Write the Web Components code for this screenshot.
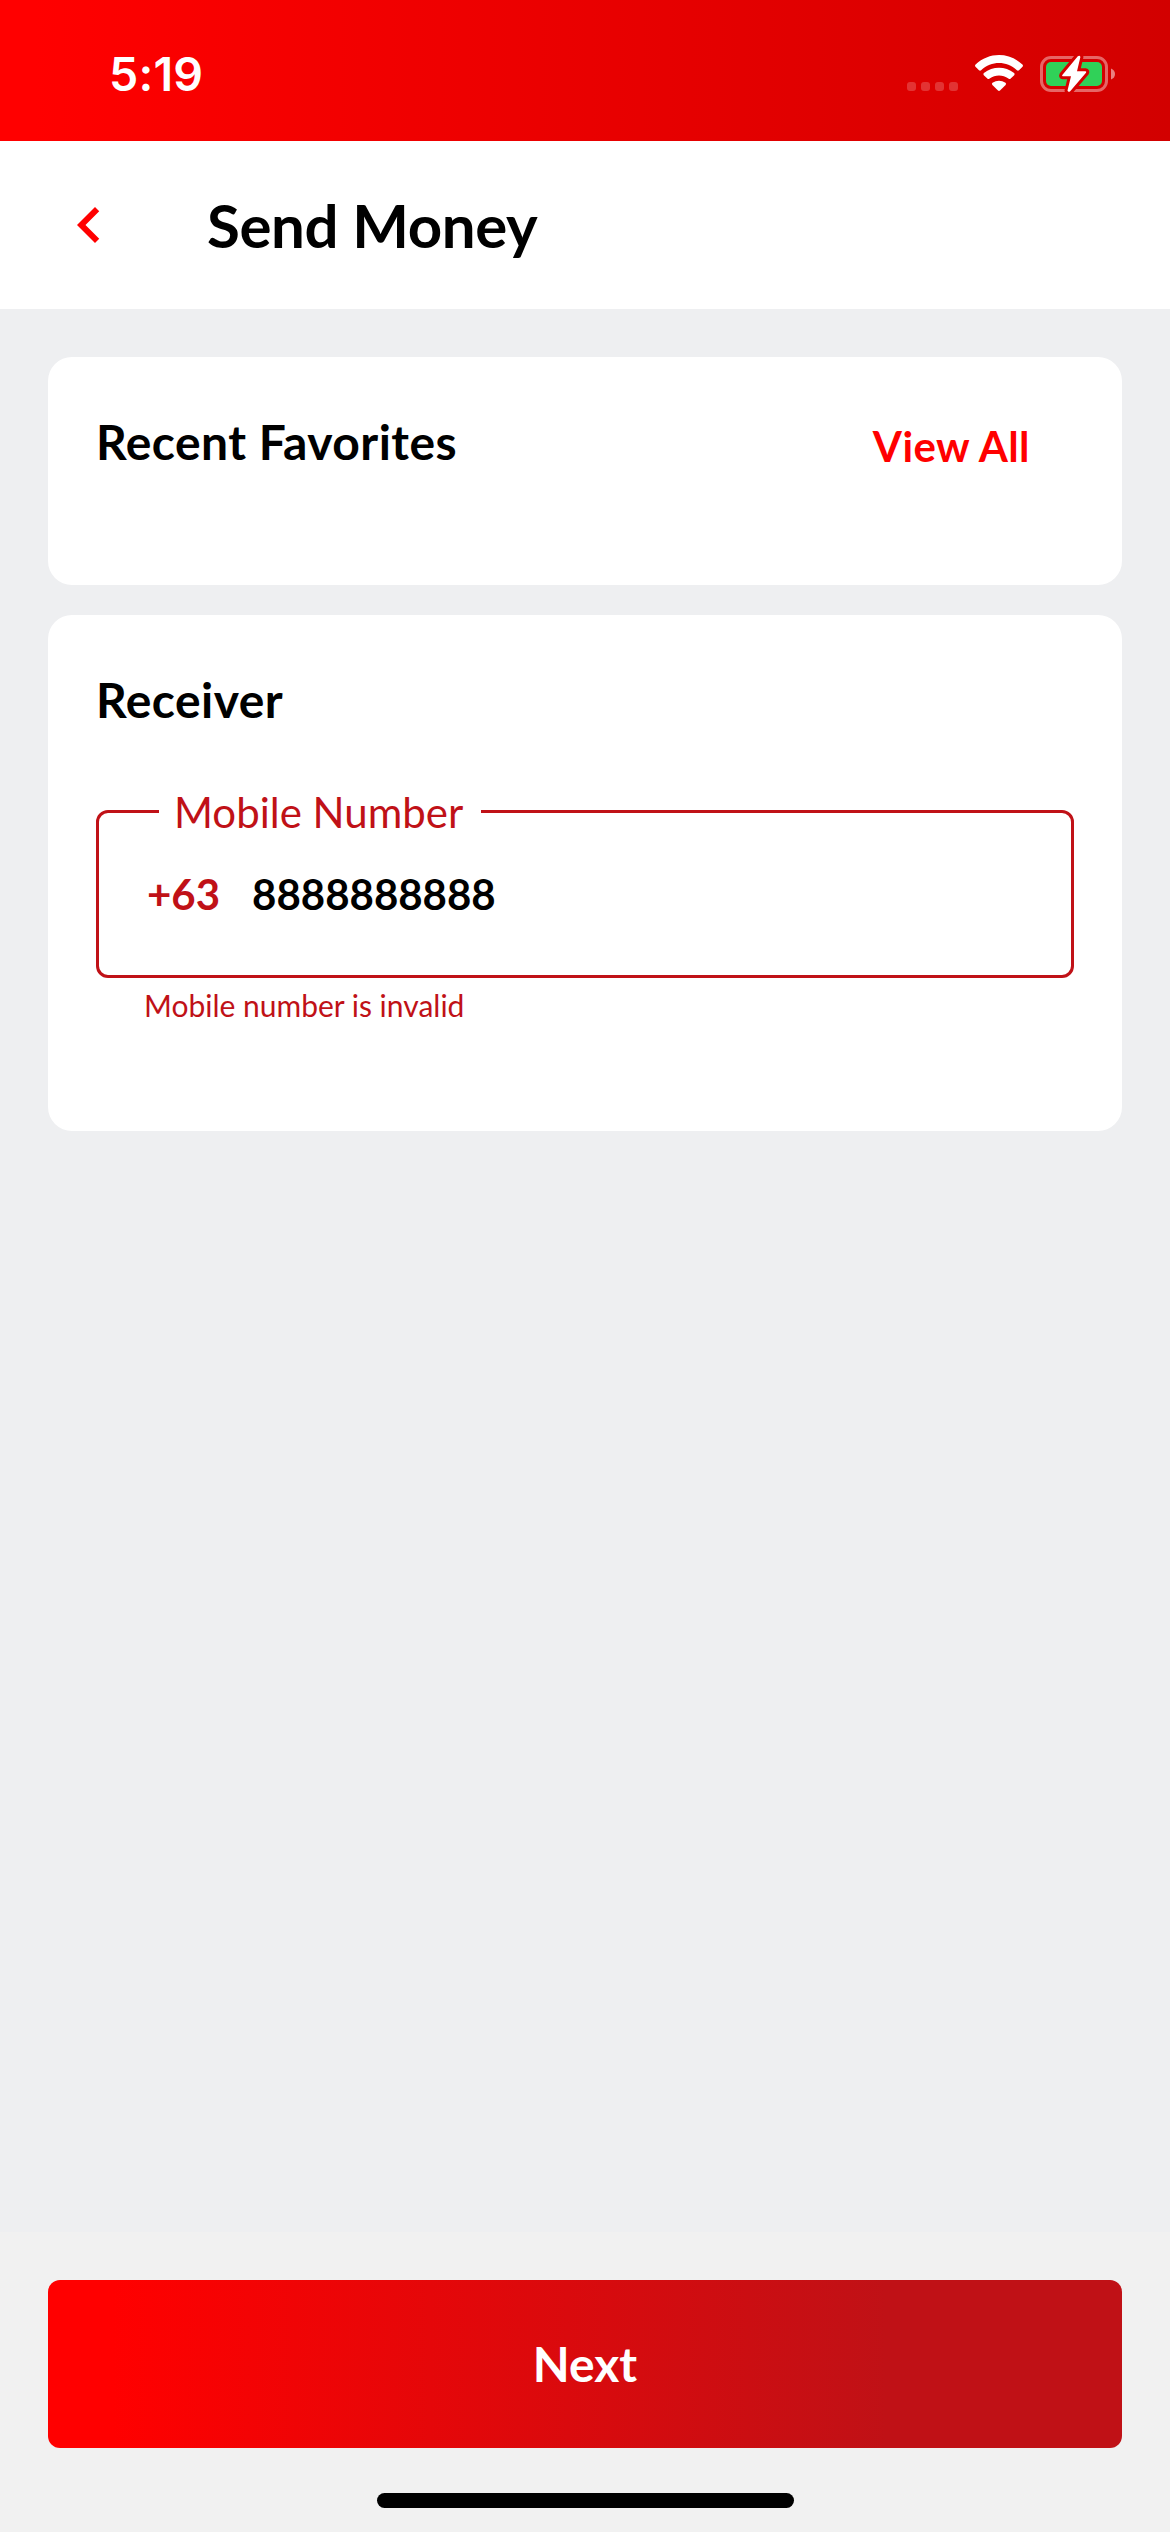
<!DOCTYPE html>
<html lang="en">
<head>
<meta charset="utf-8">
<title>Send Money</title>
<style>
  html, body { margin: 0; height: 100%; }
  body { font-family: Lato, "Open Sans", sans-serif; color: #000; background: #eeeff1; }
</style>
</head>
<body>
<send-money-screen></send-money-screen>
<script>
const define = (name, html) => {
  const tpl = document.createElement('template');
  tpl.innerHTML = html;
  customElements.define(name, class extends HTMLElement {
    constructor() {
      super();
      this.attachShadow({ mode: 'open' }).append(tpl.content.cloneNode(true));
    }
  });
};

define('status-bar', `
  <style>
    :host { display: flex; justify-content: space-between; height: 141px; box-sizing: border-box;
      padding: 0 54px 0 109px; color: #fff;
      background: linear-gradient(90deg, #f00 0, #f00 3%, #d20000 100%); }
    time { font: 600 46.5px/56px Inter, sans-serif; margin-top: 46px; letter-spacing: .2px; }
    .icons { display: flex; margin-top: 50px; }
    svg { display: block; }
  </style>
  <time><slot></slot></time>
  <div class="icons">
    <svg width="210" height="46" viewBox="906 50 210 46">
      <g fill="#fff" fill-opacity=".2">
        <rect x="907" y="82" width="9" height="9" rx="3"/>
        <rect x="921" y="82" width="9" height="9" rx="3"/>
        <rect x="935" y="82" width="9" height="9" rx="3"/>
        <rect x="949" y="82" width="9" height="9" rx="3"/>
      </g>
      <g fill="#fff">
        <path d="M975.6 64.6C989 51.900 1009 51.900 1022.400 64.600Q1023.500 65.700 1022.500 66.800L1019 70.200Q1018 71.100 1016.900 70.200C1006.500 60.700 991.500 60.700 981.100 70.200Q980 71.100 979 70.200L975.500 66.800Q974.500 65.700 975.600 64.600Z"/>
        <path d="M983.900 73C992.800 65.900 1005.200 65.900 1014.100 73Q1015.200 74.100 1014.200 75.200L1010.700 78.600Q1009.600 79.600 1008.400 78.600C1002.800 74.300 995.200 74.300 989.600 78.600Q988.400 79.600 987.300 78.600L983.800 75.200Q982.800 74.100 983.900 73Z"/>
        <path d="M992.500 82.800C996.600 80 1001.400 80 1005.500 82.800Q1006.700 83.900 1005.600 85L1000 90.500Q999 91.400 998 90.500L992.400 85Q991.300 83.900 992.500 82.800Z"/>
      </g>
      <mask id="cut" maskUnits="userSpaceOnUse" x="1030" y="46" width="90" height="54">
        <rect x="1030" y="46" width="90" height="54" fill="#fff"/>
        <path d="M1077.800 56.200L1062.300 75Q1061.600 76.200 1062.900 76.300H1071L1067.500 90.600Q1068.200 92.600 1070.200 91.300L1086 72.800Q1086.800 71.300 1085.500 71.200H1077L1080.400 57Q1079.900 54.900 1077.800 56.200Z" fill="#000" stroke="#000" stroke-width="6" stroke-linejoin="round"/>
      </mask>
      <g mask="url(#cut)">
        <rect x="1041.500" y="57.500" width="65" height="33" rx="9.500" fill="none" stroke="#fff" stroke-opacity=".4" stroke-width="3"/>
        <rect x="1046" y="62" width="56" height="24" rx="5" fill="#30d158"/>
      </g>
      <path d="M1111 68.500Q1115 70 1115 74T1111 79.500Z" fill="#fff" fill-opacity=".5"/>
      <path d="M1077.800 56.200L1062.300 75Q1061.600 76.200 1062.900 76.300H1071L1067.500 90.600Q1068.200 92.600 1070.200 91.300L1086 72.800Q1086.800 71.300 1085.500 71.200H1077L1080.400 57Q1079.900 54.900 1077.800 56.200Z" fill="#fff"/>
    </svg>
  </div>`);

define('app-header', `
  <style>
    :host { display: flex; align-items: center; height: 168px; padding-left: 53px; box-sizing: border-box; background: #fff; }
    svg { display: block; margin-right: 82px; }
    h1 { margin: 0; font-size: 60px; line-height: 72px; font-weight: 700; letter-spacing: -.4px; }
  </style>
  <svg width="72" height="72" viewBox="0 0 24 24" fill="#f00"><path d="M15.410 7.410L14 6l-6 6 6 6 1.410-1.410L10.830 12z"/></svg>
  <h1><slot></slot></h1>`);

define('panel-card', `
  <style>
    :host { display: block; box-sizing: border-box; background: #fff; border-radius: 24px; padding: 56px 48px 0; }
    header { display: flex; justify-content: space-between; }
    h2 { margin: 0; font-size: 48px; line-height: 58px; font-weight: 700; letter-spacing: .45px; }
  </style>
  <header><h2><slot name="title"></slot></h2><slot name="action"></slot></header>
  <slot></slot>`);

define('text-link', `
  <style>
    :host { display: block; margin: 8px 44px 0 0; color: #f00; font-size: 42px; line-height: 50px; font-weight: 700; letter-spacing: .45px; }
  </style>
  <slot></slot>`);

define('phone-field', `
  <style>
    :host { display: block; margin-top: 57px; color: #c01117; }
    fieldset { margin: 0; min-width: 0; height: 192px; box-sizing: border-box; border: 3px solid #c01117;
      border-radius: 12px; padding: 0 48px; }
    legend { margin-left: 12px; padding: 1px 18px 0 15px; font-size: 42px; line-height: 50px; height: 50px; }
    .row { display: flex; gap: 32px; margin-top: 32px; font-size: 42px; line-height: 50px; font-weight: 700; }
    .value { color: #000; }
    .error { margin: 9px 0 0 48px; font-size: 30px; line-height: 36px; }
  </style>
  <fieldset>
    <legend><slot name="label"></slot></legend>
    <div class="row"><span><slot name="prefix"></slot></span><span class="value"><slot></slot></span></div>
  </fieldset>
  <div class="error"><slot name="error"></slot></div>`);

define('action-footer', `
  <style>
    :host { display: flex; flex-direction: column; align-items: center; height: 300px; box-sizing: border-box;
      padding: 48px 48px 0; background: #f1f1f1; }
    button { display: block; width: 100%; height: 168px; border: 0; padding: 0; border-radius: 12px; color: #fff;
      font: 700 48px/58px Lato, sans-serif;
      background: linear-gradient(90deg, #f00 0, #f00 6%, #c01116 78%); }
    .home { width: 417px; height: 15px; border-radius: 8px; background: #000; margin-top: 45px; }
  </style>
  <button><slot></slot></button>
  <div class="home"></div>`);

define('send-money-screen', `
  <style>
    :host { display: flex; flex-direction: column; width: 1170px; height: 2532px; overflow: hidden; background: #eeeff1; }
    main { flex: 1; display: flex; flex-direction: column; gap: 30px; padding: 48px 48px 0; }
    .recent { height: 228px; }
    .receiver { height: 516px; }
  </style>
  <status-bar>5:19</status-bar>
  <app-header>Send Money</app-header>
  <main>
    <panel-card class="recent">
      <span slot="title">Recent Favorites</span>
      <text-link slot="action">View All</text-link>
    </panel-card>
    <panel-card class="receiver">
      <span slot="title">Receiver</span>
      <phone-field>
        <span slot="label">Mobile Number</span>
        <span slot="prefix">+63</span>8888888888<span slot="error">Mobile number is invalid</span>
      </phone-field>
    </panel-card>
  </main>
  <action-footer>Next</action-footer>`);
</script>
</body>
</html>
